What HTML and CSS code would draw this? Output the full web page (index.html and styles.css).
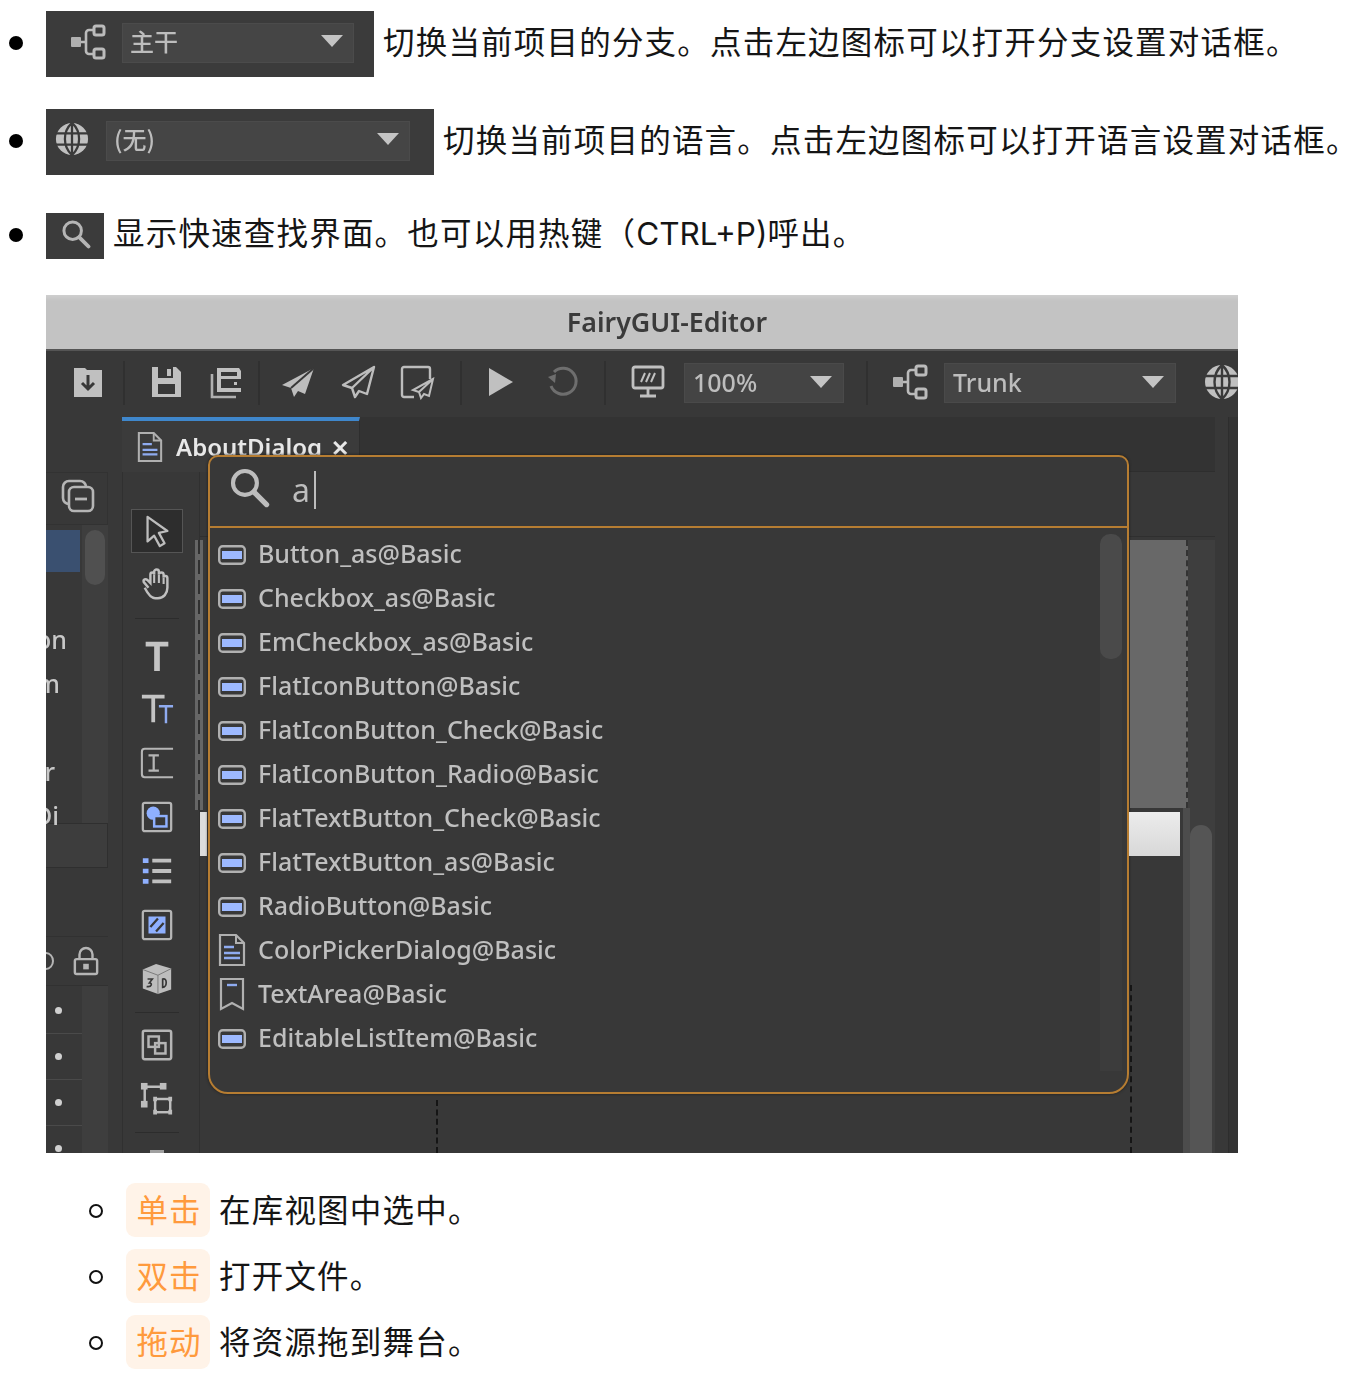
FILE: index.html
```html
<!DOCTYPE html>
<html lang="zh">
<head>
<meta charset="utf-8">
<title>FairyGUI</title>
<link rel="stylesheet" href="styles.css">
</head>
<body>
<svg class="defs" width="0" height="0" aria-hidden="true">
  <symbol id="i-branch" viewBox="0 0 36 36">
    <rect x="1" y="13" width="10" height="10" rx="1" fill="#b0b0b0"/>
    <path d="M11 18h5M16 18v-9a3 3 0 0 1 3-3h5M16 18v9a3 3 0 0 0 3 3h5" fill="none" stroke="#bbb" stroke-width="2.6"/>
    <rect x="24" y="2" width="10" height="9" rx="2" fill="none" stroke="#bbb" stroke-width="3"/>
    <rect x="24" y="25" width="10" height="9" rx="2" fill="none" stroke="#bbb" stroke-width="3"/>
  </symbol>
  <symbol id="i-globe" viewBox="0 0 36 36">
    <circle cx="18" cy="18" r="17" fill="#c0c0c0"/>
    <path d="M1 12h34M1 24h34M18 1v34M18 1C8 10 8 26 18 35M18 1c10 9 10 25 0 34" fill="none" stroke="#3a3a3a" stroke-width="2.4"/>
  </symbol>
  <symbol id="i-search" viewBox="0 0 36 36">
    <circle cx="14" cy="14" r="10.5" fill="none" stroke="currentColor" stroke-width="3.6"/>
    <path d="M22 22l11 11" stroke="currentColor" stroke-width="4.6" stroke-linecap="round"/>
  </symbol>
  <symbol id="i-btn" viewBox="0 0 28 20">
    <rect x="1.2" y="1.2" width="25.6" height="17.6" rx="3.5" fill="none" stroke="#b0b0b0" stroke-width="2.4"/>
    <rect x="4" y="6" width="20" height="8" fill="#9db9ff"/>
  </symbol>
  <symbol id="i-doc" viewBox="0 0 28 34">
    <path d="M2 2h16l8 8v22H2z" fill="none" stroke="#b0b0b0" stroke-width="2.2"/>
    <path d="M18 2v8h8" fill="none" stroke="#b0b0b0" stroke-width="2"/>
    <path d="M6 14h10M6 20h16M6 25h16" stroke="#8fabf0" stroke-width="2.4"/>
  </symbol>
  <symbol id="i-send" viewBox="0 0 36 36">
    <path d="M34 4L2 21l9 3 3 9 4-6 7 3z" fill="#bdbdbd"/>
    <path d="M34 4L11 24" stroke="#383838" stroke-width="2"/>
  </symbol>
  <symbol id="i-send-o" viewBox="0 0 36 36">
    <path d="M34 3L3 21l9 3 3 9 4-6 8 3zM34 3L12 24" fill="none" stroke="#bdbdbd" stroke-width="2.4" stroke-linejoin="round"/>
  </symbol>
</svg>

<section class="page">
  <div class="row row-a">
    <span class="dot"></span>
    <div class="chipshot chipshot-a">
      <svg class="cs-icon cs-branch"><use href="#i-branch"/></svg>
      <div class="mini-select mini-a"><span>主干</span><i class="tri"></i></div>
    </div>
    <p class="txt">切换当前项目的分支。点击左边图标可以打开分支设置对话框。</p>
  </div>
  <div class="row row-b">
    <span class="dot"></span>
    <div class="chipshot chipshot-b">
      <svg class="cs-icon cs-globe"><use href="#i-globe"/></svg>
      <div class="mini-select mini-b"><span>(无)</span><i class="tri"></i></div>
    </div>
    <p class="txt">切换当前项目的语言。点击左边图标可以打开语言设置对话框<span class="tail">。</span></p>
  </div>
  <div class="row row-c">
    <span class="dot"></span>
    <div class="chipshot chipshot-c">
      <svg class="cs-search"><use href="#i-search"/></svg>
    </div>
    <p class="txt">显示快速查找界面。也可以用热键（<span class="latin">CTRL+P)</span>呼出。</p>
  </div>

  <div class="shot">
    <div class="titlebar">FairyGUI-Editor</div>
    <div class="toolbar">
      <div class="tb-group g1">
        <svg class="ti" viewBox="0 0 36 36"><path d="M4 4h11l2 2h15v27H4z" fill="#c0c0c0"/><path d="M18 11v13M12 19l6 6 6-6" fill="none" stroke="#383838" stroke-width="3"/></svg>
      </div>
      <div class="tb-group g2">
        <svg class="ti" viewBox="0 0 36 36"><path d="M4 3h24l5 5v25H4z" fill="#c0c0c0"/><rect x="10" y="3" width="15" height="11" fill="#383838"/><rect x="19" y="5" width="4" height="7" fill="#c0c0c0"/><rect x="10" y="20" width="17" height="10" fill="#383838"/></svg>
        <svg class="ti" viewBox="0 0 36 36"><path d="M4 10v23h24" fill="none" stroke="#b0b0b0" stroke-width="2.6"/><path d="M9 4h22l2 3v21H9z" fill="#c0c0c0"/><rect x="13" y="8" width="16" height="4" fill="#383838"/><rect x="13" y="15" width="20" height="9" fill="#383838"/><rect x="26" y="18" width="3" height="3" fill="#c0c0c0"/></svg>
      </div>
      <div class="tb-group g3">
        <svg class="ti"><use href="#i-send"/></svg>
        <svg class="ti"><use href="#i-send-o"/></svg>
        <svg class="ti" viewBox="0 0 36 36"><path d="M14 33H4a2 2 0 0 1-2-2V5a2 2 0 0 1 2-2h24a2 2 0 0 1 2 2v10" fill="none" stroke="#bdbdbd" stroke-width="2.4"/><path d="M33 15L13 26l6 2 2 6 3-4 5 2zM33 15L19 28" fill="none" stroke="#bdbdbd" stroke-width="2"/></svg>
      </div>
      <div class="tb-group g4">
        <svg class="ti" viewBox="0 0 36 36"><path d="M7 4l24 14L7 32z" fill="#c0c0c0"/></svg>
        <svg class="ti" viewBox="0 0 36 36"><path d="M9 8a13 13 0 1 1-3 14" fill="none" stroke="#6e6e6e" stroke-width="3"/><path d="M3 13l8-3-1 9z" fill="#6e6e6e"/></svg>
      </div>
      <div class="tb-group g5">
        <svg class="ti" viewBox="0 0 36 36"><rect x="3" y="3" width="30" height="21" rx="2" fill="none" stroke="#c0c0c0" stroke-width="2.8"/><path d="M11 18l4-9M16 18l4-9M21 18l4-9" stroke="#c0c0c0" stroke-width="2"/><path d="M18 24v7M10 32h16" stroke="#c0c0c0" stroke-width="2.8"/></svg>
        <div class="tb-select sel-zoom"><span>100%</span><i class="tri"></i></div>
      </div>
      <div class="tb-group g6">
        <svg class="ti"><use href="#i-branch"/></svg>
        <div class="tb-select sel-branch"><span>Trunk</span><i class="tri"></i></div>
        <svg class="ti ti-globe"><use href="#i-globe"/></svg>
      </div>
    </div>

    <div class="workspace">
      <aside class="left">
        <div class="lp-head">
          <svg class="lp-icon" viewBox="0 0 34 34"><rect x="2" y="2" width="23" height="23" rx="6" fill="none" stroke="#b5b5b5" stroke-width="2.6"/><rect x="8" y="8" width="24" height="24" rx="5" fill="#383838" stroke="#b5b5b5" stroke-width="2.6"/><path d="M14 20h12" stroke="#b5b5b5" stroke-width="2.8"/></svg>
        </div>
        <div class="lp-list">
          <ul class="lp-items">
            <li class="selected"></li>
            <li></li>
            <li>on</li>
            <li class="end-m">m</li>
            <li></li>
            <li class="end-r">r</li>
            <li class="end-i">Di</li>
          </ul>
          <div class="lp-scroll"><div class="lp-thumb"></div></div>
        </div>
        <div class="lp-bar"></div>
        <div class="lp-gap"></div>
        <div class="lp-ctrl">
          <span class="eye"></span>
          <svg class="lock" viewBox="0 0 28 32"><path d="M7 14V9a7 7 0 0 1 14 0v5" fill="none" stroke="#b5b5b5" stroke-width="2.6"/><rect x="2" y="14" width="24" height="16" rx="2" fill="none" stroke="#b5b5b5" stroke-width="2.6"/><rect x="11" y="19" width="6" height="6" fill="#b5b5b5"/></svg>
        </div>
        <div class="lp-rows">
          <ul class="lp-layers"><li><b></b></li><li><b></b></li><li><b></b></li><li><b></b></li></ul>
          <div class="lp-scroll"></div>
        </div>
      </aside>

      <div class="main">
        <div class="tabstrip">
          <div class="tab">
            <svg class="tab-doc"><use href="#i-doc"/></svg>
            <span class="tab-name">AboutDialog</span>
            <span class="tab-x">✕</span>
          </div>
        </div>
        <div class="editor">
          <nav class="tools">
            <div class="tool active"><svg viewBox="0 0 36 36"><path d="M8 3l21 15-9 2 6 11-5 3-6-11-7 6z" fill="none" stroke="#bdbdbd" stroke-width="2.4" stroke-linejoin="round"/></svg></div>
            <div class="tool"><svg viewBox="0 0 36 36"><path d="M9 22l-5-6c-1-3 2-4 4-2l3 3V8c0-3 4-3 4 0V5c0-3 5-3 5 0v3c0-3 5-3 5 0v3c0-2 4-2 4 1v10c0 6-4 11-10 11h-3c-5 0-8-5-11-11" fill="none" stroke="#c0c0c0" stroke-width="2.6"/><path d="M15 8v9M20 8v9M25 11v7" stroke="#c0c0c0" stroke-width="2.2"/></svg></div>
            <div class="tool-sep"></div>
            <div class="tool"><svg viewBox="0 0 36 36"><path d="M6 4h24v5H21v26h-6V9H6z" fill="#c4c4c4"/></svg></div>
            <div class="tool"><svg viewBox="0 0 36 36"><path d="M2 3h24v4h-10v25h-4V7H2z" fill="#c4c4c4"/><path d="M20 15h15M27.500 15v18" stroke="#8fabf0" stroke-width="2.6"/></svg></div>
            <div class="tool"><svg viewBox="0 0 36 36"><path d="M35 3H5a3 3 0 0 0-3 3v24a3 3 0 0 0 3 3h30" fill="none" stroke="#b5b5b5" stroke-width="2.2"/><path d="M9 10h11M9 26h11M14.500 10v16" stroke="#b5b5b5" stroke-width="2.4"/></svg></div>
            <div class="tool"><svg viewBox="0 0 36 36"><rect x="3" y="3" width="30" height="30" rx="2" fill="none" stroke="#b5b5b5" stroke-width="2.4"/><circle cx="14" cy="14" r="7" fill="#8fb0ff"/><rect x="15" y="17" width="13" height="11" fill="#383838" stroke="#8fb0ff" stroke-width="2.6"/></svg></div>
            <div class="tool"><svg viewBox="0 0 36 36"><path d="M3 7h6M3 18h6M3 29h6" stroke="#8fb0ff" stroke-width="5"/><path d="M13 7h20M13 18h20M13 29h20" stroke="#c0c0c0" stroke-width="4"/></svg></div>
            <div class="tool"><svg viewBox="0 0 36 36"><rect x="3" y="3" width="30" height="30" rx="2" fill="none" stroke="#b5b5b5" stroke-width="2.4"/><rect x="9" y="9" width="18" height="18" fill="#8fb0ff"/><path d="M11 20l8-9M17 25l8-9" stroke="#383838" stroke-width="2.4"/></svg></div>
            <div class="tool"><svg viewBox="0 0 36 36"><path d="M17 2l16 5v22l-14 5-16-6V8z" fill="#bdbdbd"/><path d="M3 8l16 6v20M33 7l-14 7" fill="none" stroke="#777" stroke-width="1"/><path d="M8 18h5l-3 4c3 0 3 5-3 4M24 18c5-2 5 9 0 9z" fill="none" stroke="#383838" stroke-width="1.800"/></svg></div>
            <div class="tool-sep short"></div>
            <div class="tool"><svg viewBox="0 0 36 36"><rect x="3" y="3" width="30" height="30" rx="2" fill="none" stroke="#b5b5b5" stroke-width="2.6"/><rect x="9" y="9" width="11" height="11" fill="none" stroke="#b5b5b5" stroke-width="2.6"/><rect x="16" y="16" width="11" height="11" fill="none" stroke="#b5b5b5" stroke-width="2.6"/></svg></div>
            <div class="tool"><svg viewBox="0 0 36 36"><path d="M5 5h19M5 5v19" stroke="#bdbdbd" stroke-width="2.6"/><rect x="1" y="1" width="7" height="7" fill="#bdbdbd"/><rect x="21" y="1" width="7" height="7" fill="#bdbdbd"/><rect x="1" y="20" width="7" height="7" fill="#bdbdbd"/><rect x="16" y="18" width="16" height="14" fill="none" stroke="#bdbdbd" stroke-width="2.6"/><path d="M14 18h4M30 18h4M14 32h4M30 32h4" stroke="#bdbdbd" stroke-width="5"/></svg></div>
            <div class="tool-sep short"></div>
            <div class="tool tool-last"><span></span></div>
          </nav>
          <div class="stage">
            <div class="ruler"></div>
            <div class="stage-body">
              <div class="rule-strip"></div>
              <div class="canvas-area">
                <div class="canvas-grey"></div>
                <div class="canvas-white"></div>
              </div>
              <div class="stage-scroll"><div class="stage-thumb"></div></div>
            </div>
            <span class="dash dash-a"></span>
            <span class="dash dash-b"></span>
            <span class="left-white"></span>
          </div>
        </div>
      </div>
      <div class="edge"></div>
    </div>

    <div class="palette">
      <div class="palette-search">
        <svg class="ps-icon"><use href="#i-search"/></svg>
        <span class="ps-text">a</span><span class="ps-caret"></span>
      </div>
      <div class="palette-body">
        <ul class="results">
          <li><svg class="r-btn"><use href="#i-btn"/></svg>Button_as@Basic</li>
          <li><svg class="r-btn"><use href="#i-btn"/></svg>Checkbox_as@Basic</li>
          <li><svg class="r-btn"><use href="#i-btn"/></svg>EmCheckbox_as@Basic</li>
          <li><svg class="r-btn"><use href="#i-btn"/></svg>FlatIconButton@Basic</li>
          <li><svg class="r-btn"><use href="#i-btn"/></svg>FlatIconButton_Check@Basic</li>
          <li><svg class="r-btn"><use href="#i-btn"/></svg>FlatIconButton_Radio@Basic</li>
          <li><svg class="r-btn"><use href="#i-btn"/></svg>FlatTextButton_Check@Basic</li>
          <li><svg class="r-btn"><use href="#i-btn"/></svg>FlatTextButton_as@Basic</li>
          <li><svg class="r-btn"><use href="#i-btn"/></svg>RadioButton@Basic</li>
          <li><svg class="r-doc"><use href="#i-doc"/></svg>ColorPickerDialog@Basic</li>
          <li><svg class="r-doc" viewBox="0 0 28 34"><path d="M3 2h22v30l-11-6-11 6z" fill="none" stroke="#b0b0b0" stroke-width="2.2"/><path d="M9 8h10" stroke="#8fabf0" stroke-width="2.4"/></svg>TextArea@Basic</li>
          <li><svg class="r-btn"><use href="#i-btn"/></svg>EditableListItem@Basic</li>
        </ul>
        <div class="palette-scroll"><div class="palette-thumb"></div></div>
      </div>
    </div>
  </div>

  <div class="subs">
    <div class="sub"><span class="ring"></span><span class="tag">单击</span><p class="txt">在库视图中选中。</p></div>
    <div class="sub"><span class="ring"></span><span class="tag">双击</span><p class="txt">打开文件。</p></div>
    <div class="sub"><span class="ring"></span><span class="tag">拖动</span><p class="txt">将资源拖到舞台。</p></div>
  </div>
</section>
</body>
</html>
```

FILE: styles.css
```css
* { box-sizing: border-box; }
html, body { margin: 0; padding: 0; background: #fff; }
body {
  width: 1352px;
  height: 1378px;
  overflow: hidden;
  color: #111;
  font-family: "Noto Sans", "Noto Sans CJK SC", sans-serif;
}
ul { list-style: none; margin: 0; padding: 0; }
p { margin: 0; }
.defs { position: absolute; }

.page { padding-top: 11px; }

.row { display: flex; align-items: center; height: 66px; }
.row-b { margin-top: 32px; }
.row-c { margin-top: 38px; height: 46px; }
.dot {
  width: 14px; height: 14px; border-radius: 50%; background: #000;
  margin: -2px 23px 0 9px; flex: none;
}
.txt {
  font-size: 31.500px;
  line-height: 44px;
  white-space: nowrap;
  font-family: "Inter", "Noto Sans CJK SC", sans-serif;
  letter-spacing: 1.200px;
  color: #151515;
}
.latin { letter-spacing: 0; }
.tail { display: inline-block; width: 24px; letter-spacing: -8px; }
.row .txt { margin-bottom: 3px; }
.row-c .txt { margin-bottom: 4px; }
.sub .txt { margin-top: 2px; }
.chipshot {
  display: flex; align-items: center; flex: none; height: 100%;
  background: #3b3b3b; margin-right: 9px; filter: blur(.6px);
}
.chipshot-a { width: 328px; }
.chipshot-b { width: 388px; }
.chipshot-c { width: 58px; }
.cs-icon { width: 36px; height: 36px; flex: none; }
.cs-branch { margin-left: 24px; margin-top: -4px; }
.cs-globe { margin-left: 9px; width: 34px; height: 34px; margin-top: -6px; }
.cs-search { width: 30px; height: 30px; margin: -4px 0 0 15px; color: #b5b5b5; }
.mini-select {
  display: flex; align-items: center; justify-content: space-between;
  height: 40px; background: #454545; border: 1px solid #4b4b4b;
  padding: 0 10px 0 7px; color: #bdbdbd; font-size: 24px; font-weight: 500;
  font-family: "Noto Sans CJK SC", sans-serif;
}
.mini-select span { margin-top: -5px; }
.mini-select .tri { margin-top: -4px; }
.mini-a { width: 232px; margin-left: 16px; margin-top: -2px; }
.mini-b { width: 304px; margin-left: 17px; margin-top: -2px; }
.tri {
  width: 0; height: 0; flex: none;
  border-left: 11px solid transparent;
  border-right: 11px solid transparent;
  border-top: 12px solid #c4c4c4;
}

/* editor screenshot */
.shot {
  position: relative;
  width: 1192px; height: 858px;
  margin: 36px 0 0 46px;
  overflow: hidden;
  background: #383838;
  filter: blur(.6px);
  color: #c4c4c4;
  font-family: "Noto Sans", "Noto Sans CJK SC", sans-serif;
}
.titlebar {
  height: 56px; padding-left: 50px;
  background: linear-gradient(#cfcfcf 0, #c3c3c3 6px);
  border-bottom: 2px solid #555;
  color: #3b3b3b; text-align: center;
  font-size: 26.800px; font-weight: 600; line-height: 53px;
}
.toolbar {
  display: flex; align-items: center; height: 66px; background: #383838;
  padding-bottom: 2px;
}
.tb-group {
  display: flex; align-items: center; height: 44px; flex: none;
  border-right: 2px solid #303030;
}
.g1 { width: 79px; padding-left: 24px; }
.g2 { width: 135px; padding-left: 23px; gap: 24px; }
.g3 { width: 202px; padding-left: 20px; gap: 24px; }
.g4 { width: 144px; padding-left: 20px; gap: 27px; }
.g5 { width: 262px; padding-left: 24px; gap: 18px; }
.g6 { border-right: 0; padding-left: 24px; gap: 16px; width: 380px; }
.ti { width: 36px; height: 36px; flex: none; margin-top: -3px; }
.ti-globe { margin-left: 12px; }
.tb-select {
  display: flex; align-items: center; justify-content: space-between; flex: none;
  height: 40px; background: #444; border: 1px solid #4a4a4a;
  padding: 0 11px 0 8px; font-size: 25px; font-weight: 500; color: #bdbdbd;
}
.tb-select span { margin-top: -2px; }
.tb-select .tri { margin-top: -2px; }
.sel-zoom { width: 160px; }
.sel-branch { width: 232px; }

.workspace { display: flex; height: 736px; }
.left { width: 76px; flex: none; padding-top: 55px; background: #383838; }
.lp-head {
  display: flex; align-items: center; justify-content: flex-end;
  height: 53px; width: 62px; padding: 0 12px 5px 0;
  border-top: 1px solid #323232; border-bottom: 1px solid #323232;
  border-right: 1px solid #323232;
}
.lp-icon { width: 34px; height: 34px; }
.lp-list { display: flex; height: 298px; padding-top: 5px; width: 62px; }
.lp-items { width: 36px; flex: none; }
.lp-items li {
  display: flex; justify-content: flex-end; height: 44px;
  padding-right: 15px; line-height: 42px; font-size: 25px; font-weight: 500;
  color: #c8c8c8; white-space: nowrap;
}
.lp-items .end-m { padding-right: 22px; }
.lp-items .end-r { padding-right: 27px; }
.lp-items .end-i { padding-right: 23px; }
.lp-items .selected { height: 42px; margin: 0 2px 2px 0; padding: 0; background: #3a5070; }
.lp-scroll { width: 26px; flex: none; background: #3e3e3e; padding: 0 3px; margin-top: -5px; }
.lp-thumb { height: 55px; margin-top: 5px; border-radius: 10px; background: #505050; }
.lp-bar { width: 62px; height: 45px; background: #3d3d3d; border: 1px solid #2f2f2f; border-left: 0; }
.lp-gap { height: 68px; }
.lp-ctrl {
  display: flex; align-items: center; height: 50px; width: 62px;
  border-top: 1px solid #313131; border-bottom: 1px solid #313131;
}
.eye {
  width: 16px; height: 18px; margin-left: -8px; flex: none;
  border: 2px solid #b5b5b5; border-radius: 50%;
}
.lock { width: 26px; height: 30px; margin-left: 19px; flex: none; }
.lp-rows { display: flex; width: 62px; height: 170px; }
.lp-layers { width: 36px; flex: none; padding-top: 2px; }
.lp-layers li {
  display: flex; align-items: center; height: 46px; padding-left: 9px;
  border-bottom: 1px solid #4a4a4a;
}
.lp-layers b { width: 7px; height: 7px; border-radius: 50%; background: #d0d0d0; }
.lp-rows .lp-scroll { margin: 0; }

.main { display: flex; flex-direction: column; flex: none; width: 1093px; }
.tabstrip { height: 55px; background: #333; border-bottom: 1px solid #2e2e2e; flex: none; }
.tab {
  display: flex; align-items: center; width: 238px; height: 55px;
  border-top: 4px solid #3f87cc; background: #3b3b3b;
  padding-left: 15px; border-right: 1px solid #2e2e2e;
}
.tab-doc { width: 26px; height: 32px; flex: none; }
.tab-name { margin-left: 13px; color: #e8e8e8; font-size: 24px; font-weight: 600; white-space: nowrap; }
.tab-x { margin-left: 9px; color: #e8e8e8; font-size: 22px; font-weight: 700; }
.editor { display: flex; height: 681px; }
.tools {
  display: flex; flex-direction: column; align-items: center;
  width: 78px; flex: none; padding: 31px 8px 0 0;
  border-left: 1px solid #303030; border-right: 1px solid #303030;
  overflow: hidden;
}
.tool { display: flex; align-items: center; justify-content: center; height: 54px; width: 52px; flex: none; }
.tool svg { width: 34px; height: 34px; }
.tool.active { height: 44px; margin: 6px 0 4px; background: #2d2d2d; border: 1.500px solid #555; }
.tool-sep { width: 44px; height: 17px; flex: none; }
.tool-sep::before { content: ""; display: block; height: 7px; border-bottom: 1px solid #2c2c2c; }
.tool-sep.short { height: 12px; }
.tool-sep.short::before { height: 6px; }
.tool-last { align-items: flex-start; padding-top: 12px; }
.tool-last span { width: 14px; height: 5px; background: #a0a0a0; }

.stage { position: relative; flex: 1; min-width: 0; display: flex; flex-direction: column; }
.ruler { height: 65px; border-bottom: 1px solid #2f2f2f; flex: none; }
.stage-body { display: flex; flex: 1; min-height: 0; padding-top: 3px; }
.rule-strip {
  width: 8px; flex: none; height: 270px; margin-left: -5px;
  background: repeating-linear-gradient(#303030 0 14px, transparent 14px 20px) 3px 0 / 2px 100% no-repeat, #666;
}
.canvas-area {
  position: relative; z-index: 1;
  display: flex; flex-direction: column; align-items: flex-end;
  flex: 1; min-width: 0;
}
.canvas-grey {
  width: 58px; height: 268px; margin-right: -5px; background: #686868;
  border-right: 2px dashed #333;
}
.canvas-white { width: 51px; height: 44px; margin: 4px 3px 0 0; background: linear-gradient(#ececec, #d8d8d8); }
.stage-scroll {
  width: 32px; flex: none; padding: 285px 3px 0 7px;
  background: linear-gradient(#4c4c4c, #4c4c4c) 0 268px / 7px 100% no-repeat, #3e3e3e;
}
.stage-thumb { height: 330px; width: 22px; background: #555; border-radius: 11px 11px 0 0; }
.dash { position: absolute; width: 0; border-left: 2px dashed #151515; }
.dash-a { left: 236px; bottom: 0; height: 53px; }
.dash-b { left: 930px; bottom: 0; height: 168px; }
.left-white { position: absolute; left: 0; top: 340px; width: 7px; height: 44px; background: #dcdcdc; }
.edge { width: 10px; flex: none; background: #333; border-left: 1px solid #2d2d2d; margin-left: 13px; }

/* quick-find palette */
.palette {
  position: absolute; left: 162px; top: 160px;
  width: 921px; height: 639px;
  display: flex; flex-direction: column;
  background: #383838;
  border: 2.500px solid #b67d32;
  border-radius: 10px 10px 20px 20px;
  box-shadow: 0 0 3px #1b1b1b;
}
.palette-search {
  display: flex; align-items: center; height: 71px; flex: none;
  padding-left: 19px; border-bottom: 2.500px solid #b67d32;
}
.ps-icon { width: 41px; height: 41px; color: #bdbdbd; margin-top: -8px; }
.ps-text { margin: -4px 0 0 22px; font-size: 32px; color: #bdbdbd; }
.ps-caret { width: 2px; height: 38px; margin: -4px 0 0 4px; background: #bdbdbd; }
.palette-body { display: flex; flex: 1; min-height: 0; padding: 3px 5px 21px 8px; }
.results { flex: 1; min-width: 0; }
.results li {
  display: flex; align-items: center; height: 44px;
  font-size: 25px; font-weight: 500; color: #bfbfbf; white-space: nowrap;
}
.r-btn { width: 28px; height: 20px; margin: 4px 12px 0 0; flex: none; }
.r-doc { width: 28px; height: 34px; margin: 2px 12px 0 0; flex: none; }
.palette-scroll { width: 22px; flex: none; margin-top: 3px; background: #3c3c3c; border-radius: 10px 10px 0 0; }
.palette-thumb { height: 125px; background: #4a4a4a; border-radius: 10px; }

/* bottom list */
.subs { margin-top: 30px; }
.sub { display: flex; align-items: center; height: 54px; margin-bottom: 12px; }
.ring {
  width: 14px; height: 14px; border: 2px solid #111; border-radius: 50%;
  margin: 2px 23px 0 89px; flex: none;
}
.tag {
  display: flex; align-items: center; height: 54px; padding: 0 8.500px 4px 10.500px;
  margin-right: 9px; flex: none;
  background: #fff3e8; border-radius: 9px;
  color: #ff9a3d; font-size: 31.500px; letter-spacing: 1px; line-height: 44px;
  font-family: "Noto Sans CJK SC", sans-serif;
}
```
